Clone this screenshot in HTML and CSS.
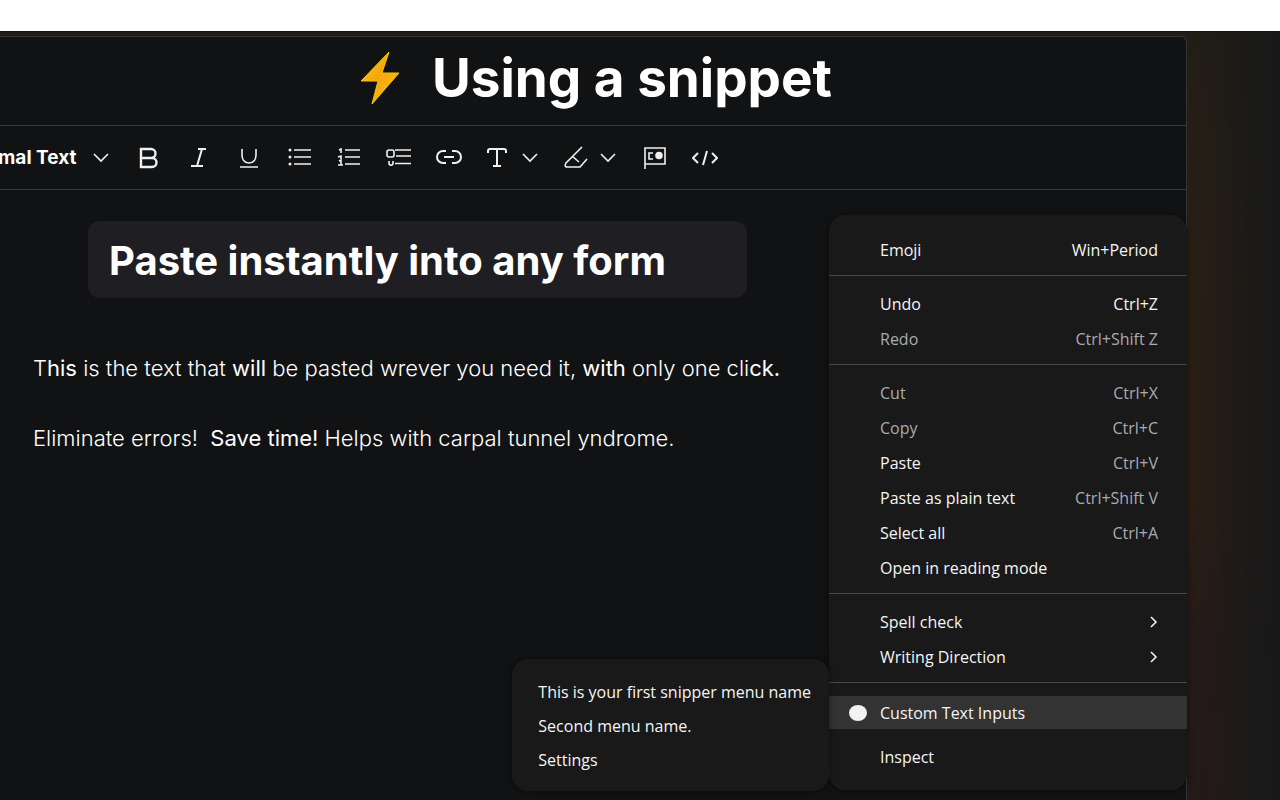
FILE: index.html
```html
<!DOCTYPE html>
<html lang="en">
<head>
    <meta charset="UTF-8">
    <meta name="viewport" content="width=device-width, initial-scale=1.0">
    <title>Using a snippet</title>
    <link rel="stylesheet" href="styles.css">
</head>
<body>
    <div class="backdrop">
        <main class="window">
            <header class="title-bar">
                <svg class="bolt" width="40" height="54" viewBox="0 0 40 54" aria-hidden="true">
                    <defs>
                        <linearGradient id="boltFill" x1="0" y1="0" x2="1" y2="1">
                            <stop offset="0" stop-color="#ffd21a"/>
                            <stop offset="0.45" stop-color="#f6a50c"/>
                            <stop offset="1" stop-color="#ffc814"/>
                        </linearGradient>
                    </defs>
                    <path d="M29 1 L1 30 H18 L12 53 L39 22 H22 Z" fill="url(#boltFill)" stroke="#f5c400" stroke-width="1"/>
                </svg>
                <h1>Using a snippet</h1>
            </header>

            <div class="toolbar">
                <label class="style-picker">
                    <select aria-label="Text style">
                        <option>Normal Text</option>
                    </select>
                    <svg class="chevron" width="16" height="16" viewBox="0 0 16 16"><path d="M1 4l7 7 7-7"/></svg>
                </label>
                <button type="button" class="tool" aria-label="Bold">
                    <svg width="24" height="24" viewBox="0 0 24 24"><path stroke-width="2.4" d="M4 3h10a4 4 0 0 1 0 9H4zM4 12h11a4.500 4.500 0 0 1 0 9H4z"/></svg>
                </button>
                <button type="button" class="tool" aria-label="Italic">
                    <svg width="24" height="24" viewBox="0 0 24 24"><path stroke-width="2" d="M11 3h8M4 20h12M15 3L10 20"/></svg>
                </button>
                <button type="button" class="tool" aria-label="Underline">
                    <svg width="24" height="24" viewBox="0 0 24 24"><path d="M5 3v6c0 4 2 8 7 8s7-4 7-8V3M3 21h18"/></svg>
                </button>
                <button type="button" class="tool" aria-label="Bulleted list">
                    <svg width="24" height="24" viewBox="0 0 24 24"><path d="M7 4h17M7 11h17M7 18h17"/><path stroke-width="3" stroke-linecap="round" d="M3 4h0M3 11h0M3 18h0"/></svg>
                </button>
                <button type="button" class="tool" aria-label="Numbered list">
                    <svg width="24" height="24" viewBox="0 0 24 24"><path d="M8 4h15M8 11h15M8 18h15M2 4l2-1v4M1 11l3-1v3M1 19h5M2 15l2-1v5"/></svg>
                </button>
                <button type="button" class="tool" aria-label="Checklist">
                    <svg width="26" height="24" viewBox="0 0 26 24"><rect x="1" y="4" width="7" height="7" rx="2"/><path d="M9 4h16M10 10h15M9 17.500h16M3 15v2c0 3 4 3 4 0v-2"/></svg>
                </button>
                <button type="button" class="tool" aria-label="Link">
                    <svg width="26" height="24" viewBox="0 0 26 24"><path stroke-width="2" d="M10 5H7a6 6 0 0 0 0 12h3M16 5h3a6 6 0 0 1 0 12h-3M8 11h10"/></svg>
                </button>
                <button type="button" class="tool tool-menu" aria-label="Text colour">
                    <svg width="24" height="24" viewBox="0 0 24 24"><path stroke-width="2" d="M2 7V5q0-2 2-2h14q2 0 2 2v2M11 3v17M7 20h8"/></svg>
                    <svg class="chevron" width="16" height="16" viewBox="0 0 16 16"><path d="M1 4l7 7 7-7"/></svg>
                </button>
                <button type="button" class="tool tool-menu" aria-label="Highlight">
                    <svg width="24" height="24" viewBox="0 0 24 24"><path d="M18 1L2 17q-2 4 1 4h13l7-8M8 10l7 6"/></svg>
                    <svg class="chevron" width="16" height="16" viewBox="0 0 16 16"><path d="M1 4l7 7 7-7"/></svg>
                </button>
                <button type="button" class="tool" aria-label="Card">
                    <svg width="24" height="24" viewBox="0 0 24 24"><path d="M2 23V2h20v16H2M10 7H6v6h4"/><circle class="dot" cx="16" cy="9.500" r="3"/></svg>
                </button>
                <button type="button" class="tool" aria-label="Code">
                    <svg width="26" height="24" viewBox="0 0 26 24"><path stroke-width="2" d="M6 7l-5 5 5 5M20 7l5 5-5 5M15 5l-4 14"/></svg>
                </button>
            </div>

            <section class="editor">
                <div class="document">
                    <h2>Paste instantly into any form</h2>
                    <p>T<b>his</b> is the text that <b>will</b> be pasted wrever you need it, <b>with</b> only one cli<b>ck.</b></p>
                    <p>Eliminate errors!&nbsp; <b>Save&nbsp;time!</b> Helps with carpal tunnel yndrome.</p>
                </div>

                <nav class="menu" aria-label="Context menu">
                    <div class="group">
                        <button type="button" class="item">Emoji <kbd>Win+Period</kbd></button>
                    </div>
                    <div class="group">
                        <button type="button" class="item">Undo <kbd>Ctrl+Z</kbd></button>
                        <button type="button" class="item muted">Redo <kbd>Ctrl+Shift Z</kbd></button>
                    </div>
                    <div class="group">
                        <button type="button" class="item muted">Cut <kbd>Ctrl+X</kbd></button>
                        <button type="button" class="item muted">Copy <kbd>Ctrl+C</kbd></button>
                        <button type="button" class="item">Paste <kbd class="dim">Ctrl+V</kbd></button>
                        <button type="button" class="item">Paste as plain text <kbd class="dim">Ctrl+Shift V</kbd></button>
                        <button type="button" class="item">Select all <kbd class="dim">Ctrl+A</kbd></button>
                        <button type="button" class="item">Open in reading mode</button>
                    </div>
                    <div class="group">
                        <button type="button" class="item">Spell check
                            <svg class="arrow" width="8" height="12" viewBox="0 0 8 12"><path d="M1 1l5 5-5 5"/></svg>
                        </button>
                        <button type="button" class="item">Writing Direction
                            <svg class="arrow" width="8" height="12" viewBox="0 0 8 12"><path d="M1 1l5 5-5 5"/></svg>
                        </button>
                    </div>
                    <div class="group last">
                        <button type="button" class="item active"><span class="bullet"></span>Custom Text Inputs</button>
                        <button type="button" class="item">Inspect</button>
                    </div>

                    <div class="menu submenu">
                        <button type="button" class="item">This is your first snipper menu name</button>
                        <button type="button" class="item">Second menu name.</button>
                        <button type="button" class="item">Settings</button>
                    </div>
                </nav>
            </section>
        </main>
    </div>
</body>
</html>
```
FILE: styles.css
```css
* {
    margin: 0;
    padding: 0;
    box-sizing: border-box;
}

body {
    font-family: Inter, "Liberation Sans", sans-serif;
    background: #fff;
    color: #fff;
    min-height: 100vh;
    padding-top: 31px;
    display: flex;
    overflow: hidden;
}

.backdrop {
    flex: 1;
    display: flex;
    padding: 4px 93px 0 0;
    background:
        linear-gradient(to left, #171819, rgba(29, 27, 24, 0.8) 50px, transparent 94px),
        linear-gradient(#221d16, #2b1f14 30%, #2c1e14 60%, #271a19 80%, #271819);
    border-top: 1px solid #101110;
}

.window {
    flex: 1;
    min-width: 0;
    display: flex;
    flex-direction: column;
    background: #111214;
    border: 1px solid #343537;
    border-left: none;
    border-bottom: none;
    border-radius: 0 6px 0 0;
}

.title-bar {
    height: 89px;
    display: flex;
    justify-content: center;
    align-items: center;
    gap: 32px;
    padding: 0 0 6px 6px;
    border-bottom: 1px solid #3a3a3c;
}

h1 {
    font-size: 53px;
    font-weight: 700;
    line-height: 64px;
}

.toolbar {
    height: 64px;
    display: flex;
    align-items: center;
    border-bottom: 1px solid #3a3a3c;
    overflow: hidden;
}

svg {
    fill: none;
    stroke: #f0f0f0;
    stroke-width: 1.6;
    flex: none;
}

.dot {
    fill: #f0f0f0;
}

.style-picker {
    display: flex;
    align-items: center;
    gap: 16px;
    margin: 0 15px 0 -36px;
}

.style-picker select {
    appearance: none;
    border: none;
    background: none;
    color: #fff;
    font: 700 19px Inter, "Liberation Sans", sans-serif;
}

.tool {
    width: 50px;
    height: 40px;
    display: flex;
    justify-content: center;
    align-items: center;
    border: none;
    background: none;
    cursor: pointer;
}

.tool-menu {
    width: auto;
    gap: 12px;
    padding: 0 12px;
    margin-right: 2px;
}

.editor {
    flex: 1;
    position: relative;
    padding: 31px 358px 0 33px;
}

h2 {
    margin: 0 81px 55px 55px;
    padding: 16px 21px 13px;
    border-radius: 12px;
    background: #1f1e23;
    font-size: 40px;
    font-weight: 700;
    line-height: 48px;
    white-space: nowrap;
}

.document p {
    font-size: 22px;
    font-weight: 300;
    line-height: 30px;
    margin-bottom: 40px;
    color: #fff;
    white-space: nowrap;
}

.document b {
    font-weight: 400;
}

.menu {
    position: absolute;
    top: 25px;
    right: -1px;
    width: 358px;
    padding-top: 7px;
    border-radius: 16px;
    background: #191919;
    box-shadow: 0 0 6px rgba(0, 0, 0, 0.5);
}

.group {
    padding: 10px 0 8px;
}

.group + .group {
    border-top: 1px solid #48494a;
}

.group.last {
    padding: 13px 0 16px;
}

.item {
    width: 100%;
    height: 35px;
    display: flex;
    justify-content: space-between;
    align-items: center;
    padding: 0 29px 0 51px;
    border: none;
    background: none;
    color: #f5f5f5;
    font: 16px "Open Sans", "Noto Sans", sans-serif;
    text-align: left;
    white-space: nowrap;
    cursor: pointer;
}

.item kbd {
    font: inherit;
}

.muted,
.dim {
    color: #a9abb0;
}

.item.active {
    height: 33px;
    margin-bottom: 10px;
    padding-left: 20px;
    justify-content: flex-start;
    gap: 13px;
    background: #333;
}

.bullet {
    width: 18px;
    height: 16px;
    border-radius: 50%;
    background: #f2f2f2;
}

.submenu {
    top: auto;
    right: 100%;
    bottom: -1px;
    width: auto;
    padding: 16px 0 14px;
}

.submenu .item {
    height: 34px;
    padding: 0 18px 0 26px;
}
```
